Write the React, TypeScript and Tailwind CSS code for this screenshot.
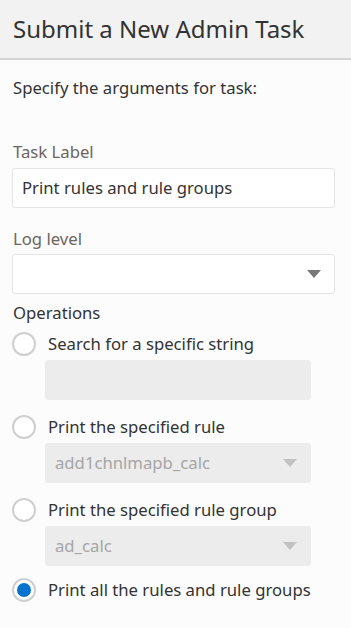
import { useState } from "react";

const Radio = ({ checked }: { checked?: boolean }) => (
  <span className="flex h-6 w-6 shrink-0 items-center justify-center rounded-full border-2 border-[#cfcfcf] bg-white">
    {checked ? <span className="h-[14px] w-[14px] rounded-full bg-[#0572ce]" /> : null}
  </span>
);

const Arrow = ({ color }: { color: string }) => (
  <svg width="14" height="8" viewBox="0 0 14 8" className="shrink-0">
    <path d="M0 0 L14 0 L7 8 Z" fill={color} />
  </svg>
);

const App = () => {
  const [op, setOp] = useState(3);
  const ops = [
    "Search for a specific string",
    "Print the specified rule",
    "Print the specified rule group",
    "Print all the rules and rule groups",
  ];

  return (
    <div className="min-h-screen bg-[#fcfcfc] text-[#333333] font-['Noto_Sans',sans-serif]">
      <header className="flex h-[60px] items-center border-b-2 border-[#d4d4d4] bg-[#f2f2f2] px-[13px]">
        <h1 className="text-[24px] leading-none text-[#333333]">Submit a New Admin Task</h1>
      </header>
      <div className="flex flex-col px-3">
        <p className="mt-[18px] px-px text-[16.7px] leading-5">Specify the arguments for task:</p>

        <label className="mt-[44px] px-px text-[16.7px] leading-5 text-[#6d6560]">Task Label</label>
        <div className="mt-[6px] flex h-10 w-[323px] items-center rounded-[3px] border border-[#e4e4e4] bg-white px-[9px] text-[16.7px]">
          Print rules and rule groups
        </div>

        <label className="mt-[21px] px-px text-[16.7px] leading-5 text-[#6d6560]">Log level</label>
        <div className="mt-[5px] flex h-10 w-[323px] items-center justify-end rounded-[3px] border border-[#e4e4e4] bg-white pr-[13px]">
          <Arrow color="#777777" />
        </div>

        <p className="mt-[9px] px-px text-[16.7px] leading-5">Operations</p>

        {ops.map((label, i) => (
          <div key={label} className={i === 0 ? "mt-[9px]" : i === 3 ? "mt-3" : "mt-[15px]"}>
            <button
              type="button"
              onClick={() => setOp(i)}
              className="flex h-6 items-center gap-[12px] text-left text-[16.7px]"
            >
              <Radio checked={op === i} />
              <span>{label}</span>
            </button>
            {i === 0 ? (
              <div className="ml-[33px] mt-1 h-10 w-[266px] rounded-[3px] bg-[#ececec]" />
            ) : null}
            {i === 1 || i === 2 ? (
              <div className="ml-[33px] mt-1 flex h-10 w-[266px] items-center justify-between rounded-[3px] bg-[#ececec] pl-[10px] pr-[14px] text-[16.7px] text-[#a5a5a5]">
                <span>{i === 1 ? "add1chnlmapb_calc" : "ad_calc"}</span>
                <Arrow color="#c2c2c2" />
              </div>
            ) : null}
          </div>
        ))}
      </div>
    </div>
  );
};

export default App;
